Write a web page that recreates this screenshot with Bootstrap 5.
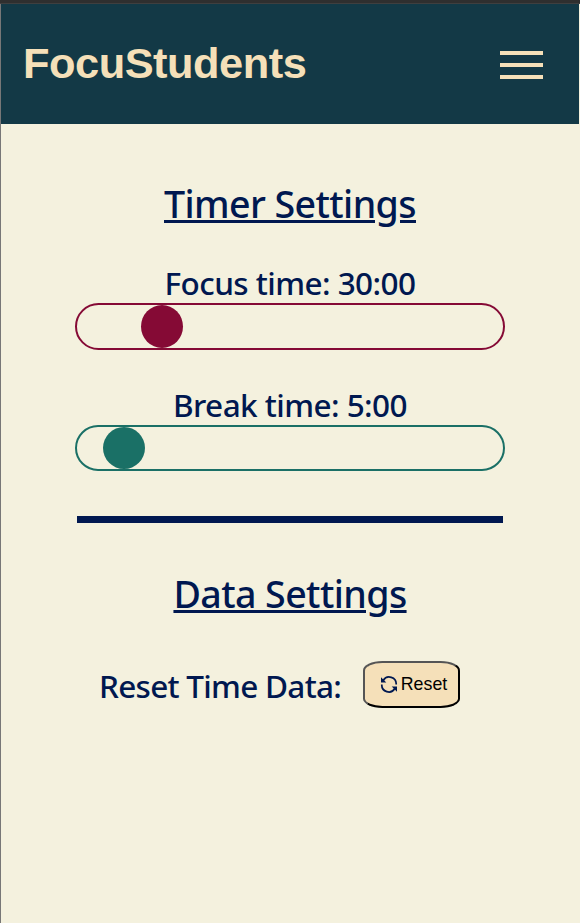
<!DOCTYPE html>
<html lang="en">
<head>
<meta charset="utf-8">
<meta name="viewport" content="width=device-width, initial-scale=1">
<title>FocuStudents</title>
<link href="https://cdn.jsdelivr.net/npm/bootstrap@5.3.0/dist/css/bootstrap.min.css" rel="stylesheet">
<style>
  body { background: #f4f1de; color: #001850; font-family: "Noto Sans", "Open Sans", sans-serif; font-weight: 500; }
  .window-edge { height: 4px; background: #2f2f2f; border-bottom: 1px solid #3f3f3f; }
  .page-frame { border-left: 1px solid #777; }
  .site-bar { height: 120px; margin-right: 1px; padding: 0 36px 0 22px; background: #133946; }
  .site-brand { font: bold 43.4px/48px "Liberation Sans", Arial, sans-serif; letter-spacing: -.5px; color: #f5e0b9; margin: 0 0 3px; padding: 0; }
  .site-brand:hover { color: #f5e0b9; }
  .menu-btn { width: 43px; gap: 8px; margin-top: 2px; }
  .menu-btn span { height: 4px; background: #f5e0b9; }
  .settings { width: 430px; margin-left: 74px; padding-top: 54px; }
  .section-title { font-size: 37.6px; line-height: 52px; font-weight: 500; letter-spacing: -.6px; text-decoration-thickness: 3px; text-underline-offset: 2px; }
  .data-title { margin-top: 45px; }
  .setting-label { font-size: 31.5px; line-height: 44px; font-weight: 500; letter-spacing: -.56px; }
  .focus-label { margin-top: 31px; margin-bottom: -2px; }
  .break-label { margin-top: 33px; margin-bottom: -2px; }
  .pill-range { height: 47px; border: 2px solid var(--tone); border-radius: 24px; }
  .pill-range::-webkit-slider-runnable-track { height: 43px; background: transparent; }
  .pill-range::-webkit-slider-thumb { width: 42px; height: 43px; margin: 0; border-radius: 50%; background: var(--tone) !important; box-shadow: none !important; }
  .focus-range { --tone: #850a35; }
  .break-range { --tone: #1a7066; height: 46px; }
  .break-range::-webkit-slider-runnable-track, .break-range::-webkit-slider-thumb { height: 42px; }
  .divider { height: 7px; margin: 45px 2px 0; background: #001850; opacity: 1; border: 0; }
  .reset-row { margin-top: 41px; padding: 0 45px 0 24px; }
  .reset-label { margin-top: 3px; letter-spacing: -.72px; }
  .reset-btn { width: 97px; height: 47px; border: 2px outset #000; border-color: #555 #000 #000 #555; border-radius: 20%; background: #f5e0b9; color: #000; font: 17.8px/20px "Liberation Sans", Arial, sans-serif; }
  .reset-btn svg { margin: 0 3px 0 4px; }
  .reset-btn span { margin-bottom: 2px; }
</style>
</head>
<body>
<div class="window-edge"></div>
<div class="page-frame min-vh-100">
  <nav class="site-bar d-flex align-items-center justify-content-between">
    <a class="site-brand navbar-brand" href="#">FocuStudents</a>
    <button class="menu-btn btn p-0 border-0 rounded-0 d-flex flex-column" type="button" aria-label="Menu">
      <span class="w-100"></span><span class="w-100"></span><span class="w-100"></span>
    </button>
  </nav>
  <main class="settings">
    <h1 class="section-title text-center text-decoration-underline mb-0">Timer Settings</h1>
    <label class="setting-label focus-label d-block text-center" for="focus">Focus time: 30:00</label>
    <input class="pill-range focus-range form-range d-block" type="range" id="focus" min="0" max="180" value="30">
    <label class="setting-label break-label d-block text-center" for="break">Break time: 5:00</label>
    <input class="pill-range break-range form-range d-block" type="range" id="break" min="0" max="75" value="5">
    <hr class="divider">
    <h2 class="section-title data-title text-center text-decoration-underline mb-0">Data Settings</h2>
    <div class="reset-row d-flex align-items-start">
      <span class="setting-label reset-label">Reset Time Data:</span>
      <button class="reset-btn d-flex align-items-center justify-content-center p-0 ms-auto" type="button">
        <svg width="18" height="18" viewBox="0 0 18 18" fill="none" stroke="#001850" stroke-width="1.7"><path d="M3.200 4.500A7 7 0 0 1 16.200 8.500M14.800 12.500A7 7 0 0 1 1.800 8.500"/><path d="M1 1.200V6.500H6.300ZM17 15.800V10.500H11.700Z" fill="#001850" stroke="none"/></svg>
        <span>Reset</span>
      </button>
    </div>
  </main>
</div>
<script src="https://cdn.jsdelivr.net/npm/bootstrap@5.3.0/dist/js/bootstrap.bundle.min.js"></script>
</body>
</html>
